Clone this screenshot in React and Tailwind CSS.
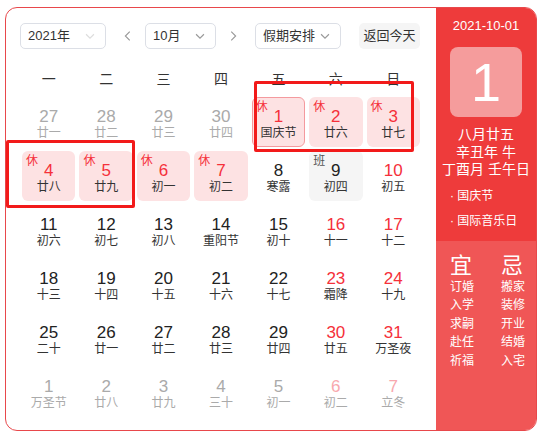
import React from "react"

const weekdays = ["一", "二", "三", "四", "五", "六", "日"]

// d: day, l: lunar, o: other month, h: holiday (休), w: workday (班), r: red number, s: selected
const days = [
  { d: 27, l: "廿一", o: true },
  { d: 28, l: "廿二", o: true },
  { d: 29, l: "廿三", o: true },
  { d: 30, l: "廿四", o: true },
  { d: 1, l: "国庆节", h: true, s: true },
  { d: 2, l: "廿六", h: true },
  { d: 3, l: "廿七", h: true },
  { d: 4, l: "廿八", h: true },
  { d: 5, l: "廿九", h: true },
  { d: 6, l: "初一", h: true },
  { d: 7, l: "初二", h: true },
  { d: 8, l: "寒露" },
  { d: 9, l: "初四", w: true },
  { d: 10, l: "初五", r: true },
  { d: 11, l: "初六" },
  { d: 12, l: "初七" },
  { d: 13, l: "初八" },
  { d: 14, l: "重阳节" },
  { d: 15, l: "初十" },
  { d: 16, l: "十一", r: true },
  { d: 17, l: "十二", r: true },
  { d: 18, l: "十三" },
  { d: 19, l: "十四" },
  { d: 20, l: "十五" },
  { d: 21, l: "十六" },
  { d: 22, l: "十七" },
  { d: 23, l: "霜降", r: true },
  { d: 24, l: "十九", r: true },
  { d: 25, l: "二十" },
  { d: 26, l: "廿一" },
  { d: 27, l: "廿二" },
  { d: 28, l: "廿三" },
  { d: 29, l: "廿四" },
  { d: 30, l: "廿五", r: true },
  { d: 31, l: "万圣夜", r: true },
  { d: 1, l: "万圣节", o: true },
  { d: 2, l: "廿八", o: true },
  { d: 3, l: "廿九", o: true },
  { d: 4, l: "三十", o: true },
  { d: 5, l: "初一", o: true },
  { d: 6, l: "初二", o: true, r: true },
  { d: 7, l: "立冬", o: true, r: true },
]

const yi = ["订婚", "入学", "求嗣", "赴任", "祈福"]
const ji = ["搬家", "装修", "开业", "结婚", "入宅"]

const Chevron = ({ dir = "down", className = "" }) => (
  <svg viewBox="0 0 16 16" className={className} fill="none" stroke="currentColor" strokeWidth="1.3">
    {dir === "down" && <path d="M3.5 6l4.5 4.5L12.5 6" />}
    {dir === "left" && <path d="M10 3L5 8l5 5" />}
    {dir === "right" && <path d="M6 3l5 5-5 5" />}
  </svg>
)

const Select = ({ label, width, chevronClass }) => (
  <div
    className={`h-[26px] ${width} border border-[#dcdfe6] rounded-[5px] flex items-center justify-between pl-[7px] pr-[8px] text-[13px] text-[#333] bg-white`}
  >
    <span>{label}</span>
    <Chevron className={`w-[14px] h-[14px] ${chevronClass}`} />
  </div>
)

const DayCell = ({ day }) => {
  let numColor = "text-[#222]"
  if (day.o) numColor = day.r ? "text-[#f8a8ae]" : "text-[#aaa]"
  else if (day.h || day.r) numColor = "text-[#f5303a]"
  const lunarColor = day.o ? "text-[#aaa]" : "text-[#333]"
  let bg = ""
  if (day.h) bg = "bg-[#fde2e3]"
  if (day.w) bg = "bg-[#f5f5f5]"
  const border = day.s ? "border border-[#f49a9e]" : "border border-transparent"
  return (
    <div className={`relative h-[50px] mx-[2px] rounded-[6px] ${bg} ${border} flex flex-col items-center pt-[9px]`}>
      {day.h && <span className="absolute left-[3px] top-[1px] text-[12px] leading-[16px] text-[#f5303a]">休</span>}
      {day.w && <span className="absolute left-[3px] top-[1px] text-[12px] leading-[16px] text-[#555]">班</span>}
      <span className={`text-[17px] leading-[20px] ${numColor}`}>{day.d}</span>
      <span className={`text-[12px] leading-[13px] ${lunarColor}`}>{day.l}</span>
    </div>
  )
}

export default function App() {
  return (
    <div
      className="relative w-[541px] h-[435px] bg-white pt-[7px] pl-[5px]"
      style={{ fontFamily: '"Liberation Sans", "Noto Sans CJK SC", Arial, sans-serif' }}
    >
      <div className="w-[532px] h-[424px] border border-[#e8484b] rounded-[12px] overflow-hidden flex">
        <div className="flex-1 pl-[14px] pt-[15px]">
          <div className="flex items-center h-[26px]">
            <Select label="2021年" width="w-[86px]" chevronClass="text-[#ddd]" />
            <Chevron dir="left" className="w-[14px] h-[14px] ml-[15px] text-[#999]" />
            <div className="ml-[10px]">
              <Select label="10月" width="w-[71px]" chevronClass="text-[#999]" />
            </div>
            <Chevron dir="right" className="w-[14px] h-[14px] ml-[10px] text-[#999]" />
            <div className="ml-[15px]">
              <Select label="假期安排" width="w-[86px]" chevronClass="text-[#999]" />
            </div>
            <div className="ml-[18px] h-[26px] w-[61px] rounded-[5px] bg-[#f5f5f5] flex items-center justify-center text-[13px] text-[#333]">
              返回今天
            </div>
          </div>
          <div className="grid grid-cols-7 w-[402px] mt-[20px] h-[20px] items-center">
            {weekdays.map((w) => (
              <div key={w} className="text-center text-[14px] text-[#333] leading-[20px]">
                {w}
              </div>
            ))}
          </div>
          <div className="grid grid-cols-7 w-[402px] mt-[8px] gap-y-[4px]">
            {days.map((day, i) => (
              <DayCell key={i} day={day} />
            ))}
          </div>
        </div>
        <div className="w-[100px] flex flex-col text-white">
          <div className="bg-[#ee3b3b] h-[233px] flex flex-col items-center pt-[10px]">
            <div className="text-[13px] leading-[16px]">2021-10-01</div>
            <div className="mt-[13px] w-[72px] h-[70px] rounded-[8px] bg-[#f59c9c] flex items-center justify-center text-[54px] leading-none">
              1
            </div>
            <div className="mt-[9px] text-[14px] leading-[17.5px] text-center">
              <div>八月廿五</div>
              <div>辛丑年 牛</div>
              <div>丁酉月 壬午日</div>
            </div>
            <div className="self-start pl-[14px] mt-[5px] text-[12px] leading-[25px]">
              <div>· 国庆节</div>
              <div>· 国际音乐日</div>
            </div>
          </div>
          <div className="flex-1 bg-[#f05656] flex pt-[13px] pl-[14px] gap-[27px]">
            <div className="flex flex-col">
              <div className="text-[22px] leading-[24px]">宜</div>
              {yi.map((t) => (
                <div key={t} className="text-[12px] leading-[18.4px]">{t}</div>
              ))}
            </div>
            <div className="flex flex-col">
              <div className="text-[22px] leading-[24px]">忌</div>
              {ji.map((t) => (
                <div key={t} className="text-[12px] leading-[18.4px]">{t}</div>
              ))}
            </div>
          </div>
        </div>
      </div>
      <div className="absolute left-[254px] top-[81px] w-[160px] h-[71px] border-[3px] border-[#f21a1a] rounded-[2px]" />
      <div className="absolute left-[6px] top-[140px] w-[129px] h-[68px] border-[3px] border-[#f21a1a] rounded-[2px]" />
    </div>
  )
}
